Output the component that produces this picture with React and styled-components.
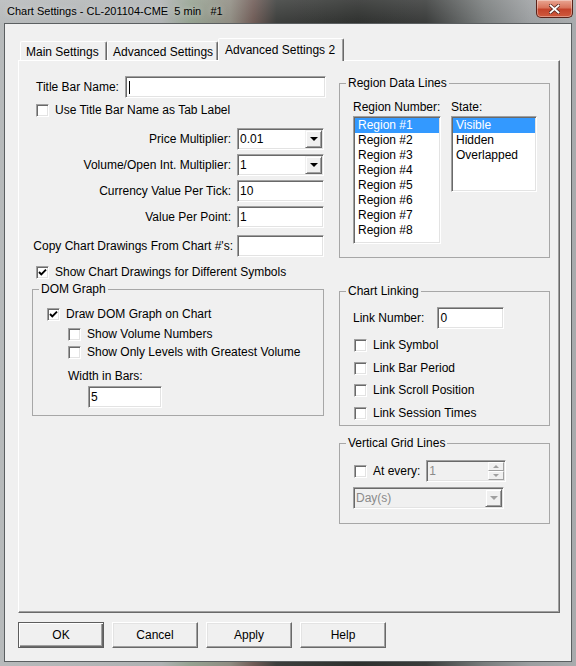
import React from "react";
import styled, { createGlobalStyle } from "styled-components";

const GlobalStyle = createGlobalStyle`
  html, body {
    margin: 0;
    padding: 0;
    background: #3a3c3c;
  }
  body {
    font-family: "Liberation Sans", Arial, sans-serif;
    font-size: 12px;
    color: #000;
  }
  * {
    box-sizing: border-box;
  }
`;

const Window = styled.div`
  width: 576px;
  height: 666px;
  display: flex;
  flex-direction: column;
  padding: 0 4px 4px 4px;
  overflow: hidden;
  background: linear-gradient(180deg, rgba(255, 255, 255, 0.12), rgba(255, 255, 255, 0) 24px),
    linear-gradient(
      90deg,
      #b7babb 0%,
      #afb2b3 28%,
      #95a291 33%,
      #8f8c82 40%,
      #6f5b56 44%,
      #3c3e3c 48%,
      #2e302e 62%,
      #3a3c3b 74%,
      #787c7c 84%,
      #9c9fa1 92%,
      #a8abad 100%
    );
`;

const TitleBar = styled.div`
  height: 23px;
  flex: none;
  display: flex;
  align-items: flex-start;
  justify-content: space-between;
  padding-left: 3px;
`;

const TitleText = styled.div`
  font-size: 11px;
  line-height: 23px;
  white-space: pre;
  color: #000;
  text-shadow: 0 0 6px rgba(255, 255, 255, 0.6);
`;

const CloseButton = styled.div`
  width: 37px;
  height: 18px;
  margin-right: -1px;
  border: 1px solid #5a2219;
  border-top: none;
  border-radius: 0 0 5px 5px;
  background: linear-gradient(180deg, #e9a693 0%, #d9745c 45%, #c4432b 55%, #cf5a3e 100%);
  box-shadow: inset 0 0 0 1px rgba(255, 255, 255, 0.35);
  display: flex;
  align-items: center;
  justify-content: center;
`;

const Client = styled.div`
  flex: 1;
  background: #f0f0f0;
  border: 1px solid #5b5f61;
  padding: 14px 0 0 13px;
  display: flex;
  flex-direction: column;
  align-items: flex-start;
`;

const TabStrip = styled.div`
  height: 22px;
  margin-left: 2px;
  display: flex;
  align-items: flex-end;
  position: relative;
  z-index: 1;
`;

const Tab = styled.div`
  width: ${(p) => p.$w}px;
  height: ${(p) => (p.$active ? 23 : 19)}px;
  margin-bottom: ${(p) => (p.$active ? -1 : 0)}px;
  padding: ${(p) => (p.$active ? "4px 0 0 6px" : "3px 0 0 5px")};
  background: #f0f0f0;
  border: 1px solid;
  border-bottom: none;
  border-color: #fff #696969 transparent #fff;
  box-shadow: inset -1px 0 0 #a0a0a0;
  border-radius: 2px 2px 0 0;
  line-height: 14px;
  white-space: nowrap;
`;

const Panel = styled.div`
  width: 542px;
  height: 553px;
  border: 1px solid;
  border-color: #fff #696969 #696969 #fff;
  box-shadow: inset -1px -1px 0 #a0a0a0;
  display: grid;
  grid-template-columns: 292px 211px;
  column-gap: 15px;
  align-items: start;
  padding: 15px 0 0 13px;
`;

const Column = styled.div`
  display: flex;
  flex-direction: column;
  align-items: stretch;
`;

const Row = styled.div`
  display: flex;
  align-items: center;
  height: 22px;
  margin-top: ${(p) => p.$mt || 0}px;
  margin-left: ${(p) => p.$ml || 0}px;
  justify-content: ${(p) => p.$justify || "flex-start"};
  gap: ${(p) => (p.$gap === undefined ? 6 : p.$gap)}px;
`;

const Label = styled.span`
  line-height: 14px;
  white-space: nowrap;
  color: ${(p) => (p.$disabled ? "#6d6d6d" : "#000")};
`;

const Caption = styled.div`
  line-height: 14px;
  margin-top: ${(p) => p.$mt || 0}px;
  margin-left: ${(p) => p.$ml || 0}px;
  white-space: nowrap;
`;

const CheckRow = styled.div`
  display: flex;
  align-items: center;
  height: 13px;
  gap: 6px;
  margin-top: ${(p) => p.$mt || 0}px;
  margin-left: ${(p) => p.$ml || 0}px;
  line-height: 13px;
  white-space: nowrap;
`;

const Box = styled.span`
  width: 13px;
  height: 13px;
  flex: none;
  background: #fff;
  border: 1px solid;
  border-color: #a0a0a0 #fff #fff #a0a0a0;
  box-shadow: inset 1px 1px 0 #696969, inset -1px -1px 0 #e3e3e3;
  display: flex;
  align-items: center;
  justify-content: center;
`;

const Sunken = styled.div`
  width: ${(p) => p.$w}px;
  height: ${(p) => p.$h || 22}px;
  flex: none;
  background: ${(p) => (p.$disabled ? "#f0f0f0" : "#fff")};
  color: ${(p) => (p.$disabled ? "#8a8a8a" : "#000")};
  border: 1px solid;
  border-color: #a0a0a0 #fff #fff #a0a0a0;
  box-shadow: inset 1px 1px 0 #696969, inset -1px -1px 0 #e3e3e3;
  padding: 1px 1px 1px 2px;
  display: flex;
  align-items: center;
  line-height: 14px;
  white-space: nowrap;
`;

const Caret = styled.span`
  width: 1px;
  height: 13px;
  margin-left: 1px;
  background: #000;
`;

const DropButton = styled.span`
  margin-left: auto;
  width: 17px;
  height: 18px;
  flex: none;
  background: #f0f0f0;
  border: 1px solid;
  border-color: #f0f0f0 #696969 #696969 #f0f0f0;
  box-shadow: inset 1px 1px 0 #fff, inset -1px -1px 0 #a0a0a0;
  display: flex;
  align-items: center;
  justify-content: center;

  &::after {
    content: "";
    border-left: 4px solid transparent;
    border-right: 4px solid transparent;
    border-top: 4px solid ${(p) => (p.$disabled ? "#a0a0a0" : "#000")};
  }
`;

const SpinButtons = styled.span`
  margin-left: auto;
  display: flex;
  flex-direction: column;
  height: 18px;
`;

const SpinPart = styled.span`
  width: 16px;
  height: 9px;
  background: #f0f0f0;
  border: 1px solid;
  border-color: #fff #a0a0a0 #a0a0a0 #fff;
  display: flex;
  align-items: center;
  justify-content: center;

  &::after {
    content: "";
    border-left: 3px solid transparent;
    border-right: 3px solid transparent;
    ${(p) => (p.$up ? "border-bottom" : "border-top")}: 3px solid #a0a0a0;
  }
`;

const Group = styled.fieldset`
  margin: ${(p) => p.$mt || 0}px 0 0 0;
  padding: 0;
  min-width: 0;
  border: 1px solid #a7a7a7;
`;

const Legend = styled.legend`
  margin-left: 6px;
  padding: 0 2px;
  line-height: 14px;
`;

const GroupBody = styled.div`
  display: flex;
  flex-direction: column;
  align-items: flex-start;
  padding: ${(p) => p.$pad};
`;

const Lists = styled.div`
  display: flex;
  gap: 10px;
  margin-top: 10px;
`;

const ListColumn = styled.div`
  display: flex;
  flex-direction: column;
  gap: 2px;
`;

const ListBox = styled.div`
  width: ${(p) => p.$w}px;
  height: ${(p) => p.$h}px;
  background: #fff;
  border: 1px solid;
  border-color: #a0a0a0 #fff #fff #a0a0a0;
  box-shadow: inset 1px 1px 0 #696969, inset -1px -1px 0 #e3e3e3;
  padding: 1px;
`;

const ListItem = styled.div`
  height: 15px;
  line-height: 15px;
  padding-left: 3px;
  white-space: nowrap;
  background: ${(p) => (p.$selected ? "#3399ff" : "transparent")};
  color: ${(p) => (p.$selected ? "#fff" : "#000")};
`;

const ButtonRow = styled.div`
  display: flex;
  gap: 8px;
  margin-top: 9px;
`;

const Button = styled.div`
  width: 86px;
  height: 26px;
  display: flex;
  align-items: center;
  justify-content: center;
  background: #f0f0f0;
  border: 1px solid;
  border-color: ${(p) => (p.$default ? "#5d5d5d" : "#fff #696969 #696969 #fff")};
  box-shadow: ${(p) =>
    p.$default
      ? "inset 1px 1px 0 #fff, inset -1px -1px 0 #696969, inset -2px -2px 0 #a0a0a0"
      : "inset -1px -1px 0 #a0a0a0, inset 1px 1px 0 #e3e3e3"};
`;

const Check = ({ checked }) => (
  <Box>
    {checked && (
      <svg width="9" height="9" viewBox="0 0 9 9">
        <polyline points="1,4 3.3,6.4 8,1.6" fill="none" stroke="#000" strokeWidth="1.9" />
      </svg>
    )}
  </Box>
);

const CheckItem = ({ checked, label, mt, ml }) => (
  <CheckRow $mt={mt} $ml={ml}>
    <Check checked={checked} />
    <span>{label}</span>
  </CheckRow>
);

const Combo = ({ w, value, disabled }) => (
  <Sunken $w={w} $disabled={disabled}>
    <span>{value}</span>
    <DropButton $disabled={disabled} />
  </Sunken>
);

const regions = ["Region #1", "Region #2", "Region #3", "Region #4", "Region #5", "Region #6", "Region #7", "Region #8"];
const states = ["Visible", "Hidden", "Overlapped"];

export default function App() {
  return (
    <>
      <GlobalStyle />
      <Window>
        <TitleBar>
          <TitleText>Chart Settings - CL-201104-CME  5 min   #1</TitleText>
          <CloseButton>
            <svg width="11" height="10" viewBox="0 0 11 10">
              <path d="M1.5 1.5 L9.5 8.5 M9.5 1.5 L1.5 8.5" stroke="#5a2a22" strokeWidth="3.4" strokeLinecap="square" />
              <path d="M1.5 1.5 L9.5 8.5 M9.5 1.5 L1.5 8.5" stroke="#fff" strokeWidth="1.8" strokeLinecap="square" />
            </svg>
          </CloseButton>
        </TitleBar>

        <Client>
          <TabStrip>
            <Tab $w={87}>Main Settings</Tab>
            <Tab $w={111}>Advanced Settings</Tab>
            <Tab $w={126} $active>
              Advanced Settings 2
            </Tab>
          </TabStrip>

          <Panel>
            <Column>
              <Row $justify="space-between" $ml={4}>
                <Label>Title Bar Name:</Label>
                <Sunken $w={201}>
                  <Caret />
                </Sunken>
              </Row>
              <CheckItem mt={6} ml={4} label="Use Title Bar Name as Tab Label" />

              <Row $justify="flex-end" $mt={11}>
                <Label>Price Multiplier:</Label>
                <Combo w={87} value="0.01" />
              </Row>
              <Row $justify="flex-end" $mt={4}>
                <Label>Volume/Open Int. Multiplier:</Label>
                <Combo w={87} value="1" />
              </Row>
              <Row $justify="flex-end" $mt={4}>
                <Label>Currency Value Per Tick:</Label>
                <Sunken $w={87}>10</Sunken>
              </Row>
              <Row $justify="flex-end" $mt={4}>
                <Label>Value Per Point:</Label>
                <Sunken $w={87}>1</Sunken>
              </Row>
              <Row $justify="flex-end" $mt={7} $gap={4}>
                <Label>Copy Chart Drawings From Chart #'s:</Label>
                <Sunken $w={87} />
              </Row>
              <CheckItem mt={9} ml={4} checked label="Show Chart Drawings for Different Symbols" />

              <Group $mt={3}>
                <Legend>DOM Graph</Legend>
                <GroupBody $pad="0 0 7px 14px">
                  <CheckItem mt={12} checked label="Draw DOM Graph on Chart" />
                  <CheckItem mt={7} ml={21} label="Show Volume Numbers" />
                  <CheckItem mt={5} ml={21} label="Show Only Levels with Greatest Volume" />
                  <Caption $mt={10} $ml={21}>
                    Width in Bars:
                  </Caption>
                  <Row $mt={3} $ml={41}>
                    <Sunken $w={74}>5</Sunken>
                  </Row>
                </GroupBody>
              </Group>
            </Column>

            <Column>
              <Group>
                <Legend>Region Data Lines</Legend>
                <GroupBody $pad="0 0 13px 13px">
                  <Lists>
                    <ListColumn>
                      <Label>Region Number:</Label>
                      <ListBox $w={88} $h={128}>
                        {regions.map((r, i) => (
                          <ListItem key={r} $selected={i === 0}>
                            {r}
                          </ListItem>
                        ))}
                      </ListBox>
                    </ListColumn>
                    <ListColumn>
                      <Label>State:</Label>
                      <ListBox $w={86} $h={76}>
                        {states.map((s, i) => (
                          <ListItem key={s} $selected={i === 0}>
                            {s}
                          </ListItem>
                        ))}
                      </ListBox>
                    </ListColumn>
                  </Lists>
                </GroupBody>
              </Group>

              <Group $mt={26}>
                <Legend>Chart Linking</Legend>
                <GroupBody $pad="0 0 5px 13px">
                  <Row $mt={9} $gap={13}>
                    <Label>Link Number:</Label>
                    <Sunken $w={67}>0</Sunken>
                  </Row>
                  <CheckItem mt={10} ml={1} label="Link Symbol" />
                  <CheckItem mt={10} ml={1} label="Link Bar Period" />
                  <CheckItem mt={9} ml={1} label="Link Scroll Position" />
                  <CheckItem mt={10} ml={1} label="Link Session Times" />
                </GroupBody>
              </Group>

              <Group $mt={10}>
                <Legend>Vertical Grid Lines</Legend>
                <GroupBody $pad="0 0 14px 13px">
                  <Row $mt={10} $ml={1} $gap={6}>
                    <CheckItem label="At every:" />
                    <Sunken $w={80} $disabled>
                      <span>1</span>
                      <SpinButtons>
                        <SpinPart $up />
                        <SpinPart />
                      </SpinButtons>
                    </Sunken>
                  </Row>
                  <Row $mt={5}>
                    <Combo w={151} value="Day(s)" disabled />
                  </Row>
                </GroupBody>
              </Group>
            </Column>
          </Panel>

          <ButtonRow>
            <Button $default>OK</Button>
            <Button>Cancel</Button>
            <Button>Apply</Button>
            <Button>Help</Button>
          </ButtonRow>
        </Client>
      </Window>
    </>
  );
}
